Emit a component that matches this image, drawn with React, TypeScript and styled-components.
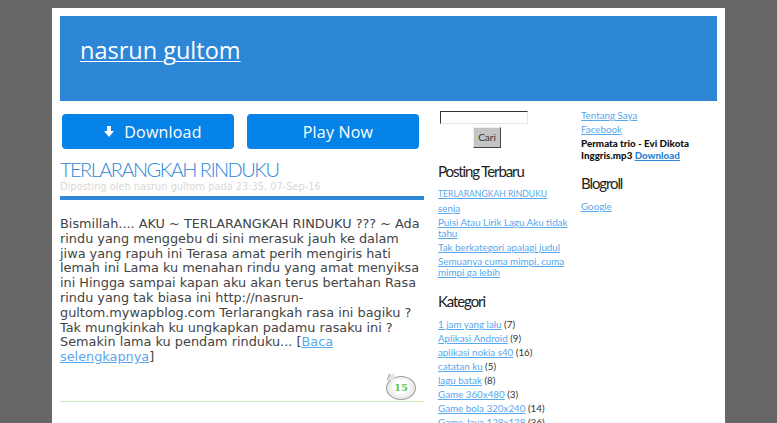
import React from 'react';
import styled, { createGlobalStyle } from 'styled-components';

const Global = createGlobalStyle`
  html, body {
    margin: 0;
    height: 423px;
    overflow: hidden;
    background: #666666;
  }
`;

const Page = styled.div`
  width: 657px;
  height: 415px;
  margin: 8px 0 0 52px;
  padding: 8px;
  background: #fff;
  font-family: "DejaVu Sans", Verdana, sans-serif;
  overflow: hidden;
`;

const Header = styled.header`
  height: 85px;
  background: #2d86d6;
  padding: 19px 0 0 20px;
  box-sizing: border-box;
`;

const SiteTitle = styled.a`
  font-family: "Open Sans", sans-serif;
  font-size: 23.5px;
  line-height: 30px;
  color: #fff;
  text-decoration: underline;
  text-decoration-thickness: 1px;
  text-underline-offset: 2px;
`;

const Columns = styled.div`
  display: flex;
  margin-top: 13px;
`;

const Main = styled.main`
  width: 364px;
  margin-right: 14px;
`;

const Buttons = styled.div`
  display: flex;
  gap: 13px;
  padding-left: 2px;
`;

const BigButton = styled.div`
  width: 172px;
  height: 35px;
  padding-left: 10px;
  box-sizing: border-box;
  border-radius: 4px;
  background: #0683e8;
  color: #fff;
  font-family: "Open Sans", sans-serif;
  font-size: 16px;
  font-weight: 500;
  letter-spacing: 0.2px;
  display: flex;
  align-items: center;
  justify-content: center;
  gap: 10px;
`;

const PostTitle = styled.h2`
  margin: 9px 0 0;
  font-family: "Lato", sans-serif;
  font-weight: 300;
  font-size: 20px;
  line-height: 22px;
  letter-spacing: -1.55px;
  color: #2d86d6;
`;

const PostMeta = styled.div`
  font-size: 9.8px;
  line-height: 13px;
  color: #d8d8d8;
  white-space: nowrap;
`;

const Rule = styled.div`
  height: 4px;
  margin-top: 3px;
  background: #2d86d6;
`;

const PostBody = styled.p`
  margin: 17px 0 0;
  font-size: 12.85px;
  line-height: 14.8px;
  color: #444;
`;

const Link = styled.a`
  color: #58a8ee;
  text-decoration: underline;
`;

const BubbleRow = styled.div`
  display: flex;
  justify-content: flex-end;
  padding-right: 8px;
  margin-top: 9px;
  border-bottom: 1px solid #c4eeb0;
  height: 27px;
`;

const Bubble = styled.div`
  position: relative;
  width: 30px;
  height: 24px;
  margin-top: 2px;
  border-radius: 50%;
  border: 1px solid #a0a0a0;
  background: radial-gradient(ellipse at 50% 45%, #fff 35%, #cfcfcf 100%);
  box-sizing: border-box;
  color: #5ecb4e;
  font-family: "DejaVu Serif", serif;
  font-weight: bold;
  font-size: 10px;
  line-height: 22px;
  text-align: center;

  &::before {
    content: "";
    position: absolute;
    left: 1px;
    top: -3px;
    width: 5px;
    height: 6px;
    background: #e4e4e4;
    border-left: 1px solid #a0a0a0;
    transform: skewX(-20deg);
  }
`;

const NextPost = styled(PostTitle)`
  margin-top: 30px;
`;

const Sidebar = styled.aside<{ $width: number; $gap?: number; $top?: number }>`
  width: ${(p) => p.$width}px;
  margin-right: ${(p) => p.$gap ?? 0}px;
  margin-top: ${(p) => p.$top ?? 0}px;
  font-family: "Lato", sans-serif;
  font-size: 9.8px;
  color: #333;
`;

const Search = styled.div`
  display: flex;
  flex-direction: column;
  align-items: flex-start;
  margin-top: -3px;
`;

const SearchInput = styled.div`
  width: 88px;
  height: 13px;
  box-sizing: border-box;
  margin-left: 2px;
  border: 1px solid;
  border-color: #333 #e6e6e6 #e6e6e6 #333;
  background: #fff;
`;

const SearchButton = styled.div`
  width: 28px;
  height: 21px;
  margin: 3px 0 0 35px;
  box-sizing: border-box;
  background: #c4c4c4;
  border: 1px solid;
  border-color: #eee #444 #444 #eee;
  font-size: 10px;
  line-height: 19px;
  text-align: center;
  color: #333;
`;

const WidgetTitle = styled.h3<{ $top: number }>`
  margin: ${(p) => p.$top}px 0 7px;
  font-family: "Lato", sans-serif;
  font-weight: 400;
  font-size: 15px;
  line-height: 20px;
  letter-spacing: -1.1px;
  color: #222;
`;

const LinkItem = styled.div<{ $caps?: boolean }>`
  margin-bottom: 2px;
  line-height: 11px;
  padding-top: 1px;
  font-size: ${(p) => (p.$caps ? '8.6px' : 'inherit')};
`;

const Track = styled.div`
  font-weight: 900;
  color: #111;
  line-height: 12px;

  ${Link} {
    color: #2d86d6;
  }
`;

const latest = [
  'TERLARANGKAH RINDUKU',
  'senja',
  'Puisi Atau Lirik Lagu Aku tidak tahu',
  'Tak berkategori apalagi judul',
  'Semuanya cuma mimpi, cuma mimpi ga lebih',
];

const categories: [string, number][] = [
  ['1 jam yang lalu', 7],
  ['Aplikasi Android', 9],
  ['aplikasi nokia s40', 16],
  ['catatan ku', 5],
  ['lagu batak', 8],
  ['Game 360x480', 3],
  ['Game bola 320x240', 14],
  ['Game Java 128x128', 36],
];

const ArrowDown = () => (
  <svg width="10" height="11" viewBox="0 0 10 11">
    <path d="M3 0h4v5h3L5 11 0 5h3z" fill="#fff" />
  </svg>
);

export default function App() {
  return (
    <Page>
      <Global />
      <Header>
        <SiteTitle>nasrun gultom</SiteTitle>
      </Header>
      <Columns>
        <Main>
          <Buttons>
            <BigButton>
              <ArrowDown />
              Download
            </BigButton>
            <BigButton>Play Now</BigButton>
          </Buttons>
          <PostTitle>TERLARANGKAH RINDUKU</PostTitle>
          <PostMeta>Diposting oleh nasrun gultom pada 23:35, 07-Sep-16</PostMeta>
          <Rule />
          <PostBody>
            Bismillah.... AKU ~ TERLARANGKAH RINDUKU ??? ~ Ada rindu yang menggebu di sini merasuk
            jauh ke dalam jiwa yang rapuh ini Terasa amat perih mengiris hati lemah ini Lama ku
            menahan rindu yang amat menyiksa ini Hingga sampai kapan aku akan terus bertahan Rasa
            rindu yang tak biasa ini http://nasrun-gultom.mywapblog.com Terlarangkah rasa ini
            bagiku ? Tak mungkinkah ku ungkapkan padamu rasaku ini ? Semakin lama ku pendam
            rinduku... [<Link>Baca selengkapnya</Link>]
          </PostBody>
          <BubbleRow>
            <Bubble>15</Bubble>
          </BubbleRow>
          <NextPost>senja</NextPost>
        </Main>
        <Sidebar $width={130} $gap={13}>
          <Search>
            <SearchInput />
            <SearchButton>Cari</SearchButton>
          </Search>
          <WidgetTitle $top={13}>Posting Terbaru</WidgetTitle>
          {latest.map((t) => (
            <LinkItem key={t} $caps={t === t.toUpperCase()}>
              <Link>{t}</Link>
            </LinkItem>
          ))}
          <WidgetTitle $top={13}>Kategori</WidgetTitle>
          {categories.map(([name, n]) => (
            <LinkItem key={name}>
              <Link>{name}</Link> ({n})
            </LinkItem>
          ))}
        </Sidebar>
        <Sidebar $width={136} $top={-5}>
          <LinkItem>
            <Link>Tentang Saya</Link>
          </LinkItem>
          <LinkItem>
            <Link>Facebook</Link>
          </LinkItem>
          <Track>
            Permata trio - Evi Dikota Inggris.mp3 <Link>Download</Link>
          </Track>
          <WidgetTitle $top={12}>Blogroll</WidgetTitle>
          <LinkItem>
            <Link>Google</Link>
          </LinkItem>
        </Sidebar>
      </Columns>
    </Page>
  );
}
